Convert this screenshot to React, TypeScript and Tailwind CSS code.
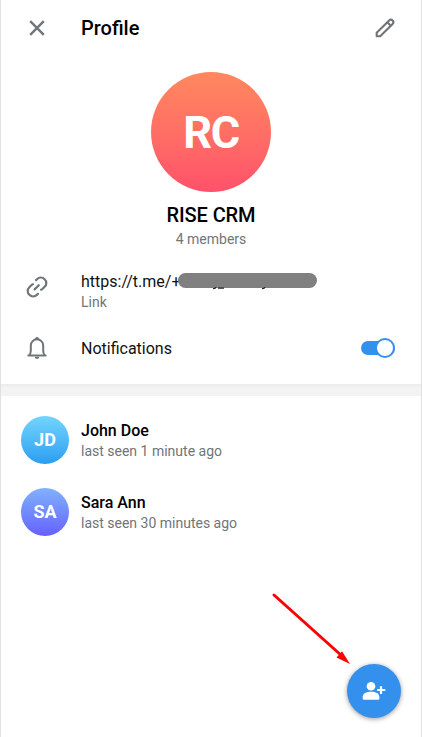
import React, { useState } from "react";

type Member = { name: string; initials: string; seen: string; gradient: string };

const members: Member[] = [
  { name: "John Doe", initials: "JD", seen: "last seen 1 minute ago", gradient: "from-[#72d5fd] to-[#2a9ef1]" },
  { name: "Sara Ann", initials: "SA", seen: "last seen 30 minutes ago", gradient: "from-[#82b1ff] to-[#665fff]" },
];

function CloseIcon() {
  return (
    <svg width="24" height="24" viewBox="0 0 24 24" fill="none" stroke="#707579" strokeWidth="2.4">
      <path d="M5.2 5.2 18.8 18.8M18.8 5.2 5.2 18.8" />
    </svg>
  );
}

function PencilIcon() {
  return (
    <svg width="24" height="24" viewBox="0 0 24 24" fill="none" stroke="#707579" strokeWidth="2.1" strokeLinejoin="round">
      <path d="M3.7 16.8 16.1 4.4a2.5 2.5 0 0 1 3.5 0 2.5 2.5 0 0 1 0 3.5L7.2 20.3H3.7Z" />
      <path d="m14.3 6.2 3.5 3.5" />
    </svg>
  );
}

function LinkIcon() {
  return (
    <svg width="24" height="24" viewBox="0 0 24 24" fill="none" stroke="#707579" strokeWidth="2.2" strokeLinecap="round">
      <path d="m11.1 5.1.9-.9a5.1 5.1 0 0 1 7.6 0 5.1 5.1 0 0 1 0 7.6l-1.9 1.9a4.6 4.6 0 0 1-1.7 1" />
      <path d="m12.9 18.9-.9.9a5.1 5.1 0 0 1-7.6 0 5.1 5.1 0 0 1 0-7.6l1.9-1.9a4.6 4.6 0 0 1 1.7-1" />
      <path d="m9.6 14.4 4.2-4.2" />
    </svg>
  );
}

function BellIcon() {
  return (
    <svg width="24" height="24" viewBox="0 0 24 24" fill="none" stroke="#707579" strokeWidth="2" strokeLinecap="round" strokeLinejoin="round">
      <path d="M3.3 19.5h17.4" />
      <path d="M4.6 18.8c1-1.2 1.2-2.3 1.2-4.2V9.5a6.2 6.2 0 0 1 12.4 0v5.1c0 1.9.2 3 1.2 4.2" />
      <path d="M10 3.1a2 2 0 0 1 4 0ZM9.8 20.7h4.4a2.2 2.2 0 0 1-4.4 0Z" fill="#707579" stroke="none" />
    </svg>
  );
}

function AddUserIcon() {
  return (
    <svg width="24" height="24" viewBox="0 0 24 24" fill="#fff">
      <circle cx="9" cy="7.2" r="4.3" />
      <path d="M.7 18.4c0-4.2 3.6-5.7 8.3-5.7s8.4 1.5 8.4 5.7v1.4q0 1-1 1H1.7q-1 0-1-1Z" />
      <path d="M19 7.2v7.8M15.1 11H23.3" stroke="#fff" strokeWidth="2.2" fill="none" />
    </svg>
  );
}

export default function App() {
  const [enabled, setEnabled] = useState(true);

  return (
    <main className="relative flex h-[737px] w-[422px] flex-col border-x border-[#dfe1e5] bg-white font-[Roboto,sans-serif] text-black">
      <header className="flex h-14 items-center pr-6 pl-6">
        <button aria-label="Close"><CloseIcon /></button>
        <h1 className="ml-8 flex-1 text-[20px] leading-6 font-medium">Profile</h1>
        <button aria-label="Edit"><PencilIcon /></button>
      </header>

      <section className="h-[328px] pt-4">
        <div className="mx-auto flex size-[120px] items-center justify-center rounded-full bg-linear-to-b from-[#ff885e] to-[#ff516a] text-[45px] leading-none font-bold tracking-[-1.5px] text-white">
          RC
        </div>
        <h2 className="mt-[10px] text-center text-[20px] leading-[26px] font-medium tracking-[-0.1px]">RISE CRM</h2>
        <p className="mt-[1px] text-center text-[14px] leading-[20px] text-[#707579]">4 members</p>

        <div className="mt-[9px] flex h-[58px] items-center pl-6">
          <LinkIcon />
          <div className="mt-[9px] ml-8">
            <div className="flex h-[21px]">
              <span className="text-[16px] leading-[21px] text-[#111]">https://t.me/+</span>
              <span className="relative mt-[2px] -ml-[3px] h-[15px] w-[139px] rounded-full bg-[#808080]">
                <svg className="absolute top-[14px] left-0" width="139" height="4" viewBox="0 0 139 4" fill="none" stroke="#222" strokeWidth="1.2">
                  <path d="M38 0q-.6 1.8-3 1.5M40 1.2h6M87 0q-.6 1.8-3 1.5" />
                </svg>
              </span>
            </div>
            <div className="text-[14px] leading-[20px] text-[#707579]">Link</div>
          </div>
        </div>

        <div className="mt-[2px] flex h-[60px] items-center pr-[26px] pl-6">
          <BellIcon />
          <span className="ml-8 flex-1 text-[16px] leading-[21px] text-[#111]">Notifications</span>
          <button
            role="switch"
            aria-label="Notifications"
            aria-checked={enabled}
            onClick={() => setEnabled(!enabled)}
            className="flex h-[14px] w-[34px] items-center justify-end rounded-full bg-[#3390ec]"
          >
            <span className="size-5 shrink-0 rounded-full border-2 border-[#3390ec] bg-white" />
          </button>
        </div>
      </section>

      <div className="h-3 shrink-0 bg-linear-to-b from-[#ebebeb] via-[#f3f3f3] via-30% to-[#f3f3f3]" />

      <ul className="pt-2">
        {members.map((m) => (
          <li key={m.name} className="flex h-[72px] items-center pl-5">
            <div className={`flex size-12 items-center justify-center rounded-full bg-linear-to-b text-[18px] leading-none font-bold text-white ${m.gradient}`}>
              {m.initials}
            </div>
            <div className="ml-3">
              <div className="text-[16px] leading-[22px] font-medium">{m.name}</div>
              <div className="text-[14px] leading-[18px] text-[#707579]">{m.seen}</div>
            </div>
          </li>
        ))}
      </ul>

      <svg className="pointer-events-none absolute top-[590px] left-[269px]" width="84" height="78" viewBox="270 590 84 78">
        <path d="m274 595 68 61" stroke="#f00" strokeWidth="3" strokeLinecap="round" />
        <path d="m350 664-13.5-6.5 5.5-6.3Z" fill="#f00" />
      </svg>
      <button
        aria-label="Add member"
        className="absolute right-5 bottom-[19px] flex size-[54px] items-center justify-center rounded-full bg-[#3390ec] shadow-[0_1px_5px_rgba(0,0,0,0.4)]"
      >
        <AddUserIcon />
      </button>
    </main>
  );
}
